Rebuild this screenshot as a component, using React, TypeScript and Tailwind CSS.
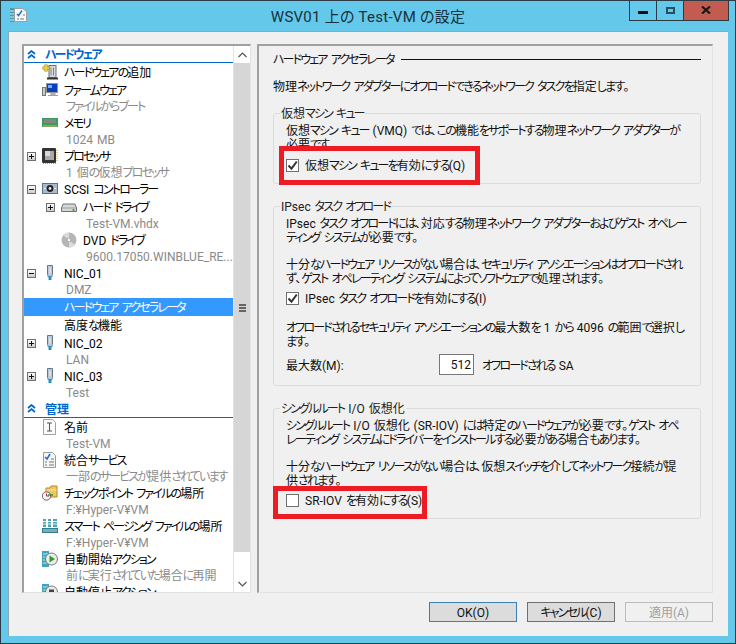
import React from "react";

const K = ({ s }: { s: string }) => (
  <span className="relative top-px [word-spacing:1px]">
    {s.split(/([\u3040-\u30ff]+)/).map((p, i) =>
      i % 2 === 1 ? (
        <span key={i} className="tracking-[-1.85px]">
          {p}
        </span>
      ) : (
        <span key={i}>{p}</span>
      ),
    )}
  </span>
);

const Sq = ({ minus }: { minus?: boolean }) => (
  <svg width="9" height="9" viewBox="0 0 9 9" className="block">
    <defs>
      <linearGradient id="exp" x1="0" y1="0" x2="0" y2="1">
        <stop offset="0" stopColor="#ffffff" />
        <stop offset="1" stopColor="#c8c8c8" />
      </linearGradient>
    </defs>
    <rect x="0.5" y="0.5" width="8" height="8" fill="url(#exp)" stroke="#6e6e6e" />
    <path d={minus ? "M2 4.5h5" : "M2 4.5h5M4.5 2v5"} stroke="#111" />
  </svg>
);

const I = ({ children }: { children: React.ReactNode }) => (
  <svg width="16" height="16" viewBox="0 0 16 16" className="block shrink-0">
    {children}
  </svg>
);

const AddHw = () => (
  <I>
    <rect x="7" y="1.5" width="7" height="12" fill="#d9dcdc" stroke="#6a6f70" />
    <path d="M9 3.5v8M11.5 3.5v8" stroke="#7d8485" />
    <path d="M5 14.5h11" stroke="#333" strokeWidth="2" />
    <path d="M4 0.5v7M0.5 4h7" stroke="#a88a10" strokeWidth="3.2" />
    <path d="M4 1v6M1 4h6" stroke="#f5d94a" strokeWidth="1.6" />
  </I>
);
const Firmware = () => (
  <I>
    <rect x="0.5" y="5.5" width="3" height="8" fill="#c8cccc" stroke="#777" />
    <rect x="4.5" y="1.5" width="11" height="9" fill="#0b3fc0" stroke="#8f9696" />
    <path d="M6 3h4v3H6z" fill="#6fb6f5" />
    <path d="M9 11h4v2H9zM6 13.5h10" stroke="#9a9f9f" fill="#c8cccc" />
  </I>
);
const Memory = () => (
  <I>
    <rect x="0" y="3" width="16" height="9" fill="#3c9b60" />
    <rect x="2" y="4" width="12" height="4" fill="#e8e8e0" />
    <path d="M3 4v4M5 4v4M7 4v4M9 4v4M11 4v4M13 4v4" stroke="#222" />
    <path d="M1 11h14" stroke="#d2b455" />
  </I>
);
const Cpu = () => (
  <I>
    <rect x="0" y="0" width="14" height="15" rx="1" fill="#333" />
    <rect x="3" y="3" width="9" height="9" fill="#a9a9a9" />
    <rect x="3" y="3" width="5" height="5" fill="#d8d8d8" />
    <path d="M15 2v12M1 15.5h13" stroke="#c79a3c" strokeDasharray="1 1" />
  </I>
);
const Scsi = () => (
  <I>
    <rect x="0.5" y="2.5" width="15" height="10" fill="#a7bad0" stroke="#5a718c" />
    <circle cx="8" cy="7.5" r="3.4" fill="#222" />
    <circle cx="8" cy="7.5" r="1.4" fill="#e8e8e8" />
    <path d="M2 7.5h2M12 7.5h2" stroke="#eee" />
  </I>
);
const Hdd = () => (
  <I>
    <path d="M2 5h12l1.5 4v3.5h-15V9z" fill="#d6d8d8" stroke="#6f7375" />
    <path d="M1 9h14" stroke="#9a9da0" />
    <rect x="11.5" y="10" width="2" height="2" fill="#5aa83c" />
  </I>
);
const Dvd = () => (
  <I>
    <circle cx="8" cy="8" r="7.5" fill="#b6b6b6" />
    <path d="M8 8L2 3a7.5 7.5 0 0 1 6-2.5z" fill="#d9d9d9" />
    <path d="M8 8l6 5a7.5 7.5 0 0 1-6 2.5z" fill="#dcdcdc" />
    <circle cx="8" cy="8" r="2" fill="#f4f4f4" stroke="#888" strokeWidth="0.6" />
  </I>
);
const Nic = () => (
  <I>
    <path d="M5.5 0.5h5v9l-1 2h-3l-1-2z" fill="#c6d2de" stroke="#62778c" />
    <path d="M7 2h2v7H7z" fill="#eef2f6" stroke="#8fa2b5" strokeWidth="0.5" />
    <path d="M6.5 12h3v3h-3z" fill="#1a92d6" />
    <path d="M5.5 11.5h1M9.5 11.5h1" stroke="#2aa5e2" />
  </I>
);
const NameI = () => (
  <I>
    <path d="M1.5 0.5h9l3 3v12h-12z" fill="#fbfbfb" stroke="#a0a0a0" />
    <path d="M5 4h5M5 12h5M7.5 4v8" stroke="#555" />
  </I>
);
const Integ = () => (
  <I>
    <path d="M1.5 0.5h9l3 3v12h-12z" fill="#f5f5f5" stroke="#9a9a9a" />
    <path d="M3 5l2 2 3-5" stroke="#1f6fd0" strokeWidth="1.6" fill="none" />
    <path d="M9 7h3M3 10h2M7 10h5M3 13h2M7 13h5" stroke="#777" />
  </I>
);
const Check = () => (
  <I>
    <path d="M4 3h4l1-2h6v11H4z" fill="#f2c45e" stroke="#b68a2c" />
    <path d="M4.5 5h10" stroke="#fbe7b0" />
    <circle cx="4.5" cy="11" r="4.2" fill="#f4f4f4" stroke="#666" />
    <path d="M4.5 8.5V11H7" stroke="#c23" fill="none" />
    <path d="M6 10h5" stroke="#2e8b3a" strokeWidth="1.4" />
  </I>
);
const Paging = () => (
  <I>
    <path d="M1 1h3v8H1zM6 1h3v8H6zM11 1h4v8h-4z" fill="#4fa4b4" />
    <path d="M1 3.5h3M6 3.5h3M11 3.5h4M1 6h3M6 6h3M11 6h4" stroke="#e6f2f4" />
    <rect x="0" y="10" width="16" height="5" fill="#2f7f90" />
    <path d="M2 11v3M4 11v3M6 11v3M8 11v3M10 11v3M12 11v3M14 11v3" stroke="#c9dde2" />
  </I>
);
const AutoStart = ({ stop }: { stop?: boolean }) => (
  <I>
    <rect x="0" y="0" width="7" height="16" fill="#3ea5ba" />
    <path d="M1 3h5M1 6h5M1 9h5M1 12h5" stroke="#bfe6ee" />
    <circle cx="9.5" cy="8" r="6" fill="#ececec" stroke="#777" />
    {stop ? <rect x="7" y="5.5" width="5" height="5" fill="#444" /> : <path d="M7.5 4.5v7l5.5-3.5z" fill="#2f9c2f" />}
  </I>
);

type RowT = {
  t: string;
  icon?: React.ReactNode;
  ex?: "p" | "m";
  d2?: boolean;
  sel?: boolean;
  sub?: string;
  subH?: string;
};

const Row = ({ t, icon, ex, d2, sel, sub, subH }: RowT) => (
  <>
    <div className={`flex h-[18px] shrink-0 items-center ${sel ? "bg-[#3399ff] text-white" : "text-black"}`}>
      <div className={`flex w-[18px] shrink-0 items-center pl-[3px] ${d2 ? "ml-[19px]" : ""}`}>
        {ex ? <Sq minus={ex === "m"} /> : null}
      </div>
      <div className="h-4 w-4 shrink-0">{icon}</div>
      <span className="ml-[6px] whitespace-nowrap leading-[18px]">
        <K s={t} />
      </span>
    </div>
    {sub ? (
      <div className={`${subH ?? "h-[15px]"} shrink-0 whitespace-nowrap leading-[15px] text-[#8a8a8a] ${d2 ? "pl-[62px]" : "pl-[42px]"}`}>
        <K s={sub} />
      </div>
    ) : null}
  </>
);

const Header = ({ t, h }: { t: string; h: string }) => (
  <div className={`flex ${h} shrink-0 items-center border-b border-[#0066cc] pl-[3px] font-bold text-[#0066cc]`}>
    <svg width="9" height="9" viewBox="0 0 9 9" className="block shrink-0">
      <path d="M1 4l3.5-3L8 4M1 8l3.5-3L8 8" fill="none" stroke="#0066cc" strokeWidth="1.7" />
    </svg>
    <span className="ml-[9px] whitespace-nowrap">
      <K s={t} />
    </span>
  </div>
);

const Box = ({ on }: { on?: boolean }) => (
  <span className="flex h-[13px] w-[13px] shrink-0 items-center justify-center border border-[#6f6f6f] bg-white">
    {on ? (
      <svg width="11" height="11" viewBox="0 0 11 11">
        <path d="M1.5 5.5l3 3.2L9.8 1.5" fill="none" stroke="#333" strokeWidth="2" />
      </svg>
    ) : null}
  </span>
);

const CheckRow = ({ on, label, children }: { on?: boolean; label: string; children?: React.ReactNode }) => (
  <div className="relative flex h-4 items-center gap-[6px] whitespace-nowrap">
    <Box on={on} />
    <span>
      <K s={label} />
    </span>
    {children}
  </div>
);

const Group = ({ legend, className, children }: { legend: string; className: string; children: React.ReactNode }) => (
  <fieldset className={`min-w-0 rounded-[3px] border border-[#dcdcdc] pr-2 pb-[10px] pl-3 ${className}`}>
    <legend className="-ml-[6px] h-4 px-px leading-4 whitespace-nowrap text-[#222]">
      <K s={legend} />
    </legend>
    {children}
  </fieldset>
);

const Lines = ({ lines, className }: { lines: string[]; className: string }) => (
  <div className={`leading-[14px] whitespace-nowrap ${className}`}>
    {lines.map((l, i) => (
      <div key={i} className="h-[14px]">
        <K s={l} />
      </div>
    ))}
  </div>
);

const Btn = ({ t, cls }: { t: string; cls: string }) => (
  <div className={`flex h-[20px] w-[88px] items-center justify-center border ${cls}`}>
    <span>
      <K s={t} />
    </span>
  </div>
);

export default function App() {
  return (
    <div className="h-[644px] w-[736px] overflow-hidden border border-[#2b3b45] bg-[#64c8ea] font-['Roboto','Noto_Sans_CJK_JP',sans-serif] text-[12px] text-[#111] [font-feature-settings:'palt']">
      <div className="grid h-[30px] grid-cols-[1fr_auto_1fr]">
        <div className="pt-[6px] pl-[9px]">
          <svg width="17" height="16" viewBox="0 0 17 16" className="block">
            <rect x="0" y="1" width="5" height="14" fill="#3f9fb4" />
            <path d="M0 4h5M0 7h5M0 10h5M0 13h5" stroke="#cfeaf0" />
            <path d="M4.5 1.5h8l4 3v10h-12z" fill="#f8f8f8" stroke="#9aa0a0" />
            <path d="M7 7l1.6 1.6L12 3.5" fill="none" stroke="#1f6fd0" strokeWidth="1.5" />
            <path d="M7 12h2M10 12h4M13 8h2" stroke="#777" />
          </svg>
        </div>
        <div className="pt-[6px] text-[15px] leading-[20px] tracking-[0.25px] whitespace-nowrap text-[#17303c]">WSV01 上の Test-VM の設定</div>
        <div className="flex justify-end pr-[6px]">
          <div className="flex h-[20px] w-[28px] items-center justify-center border-x border-b border-[#2b3b45]">
            <svg width="10" height="3" viewBox="0 0 10 3" className="mt-[4px]">
              <rect width="10" height="3" fill="#111" />
            </svg>
          </div>
          <div className="flex h-[20px] w-[27px] items-center justify-center border-r border-b border-[#2b3b45]">
            <svg width="9" height="7" viewBox="0 0 9 7" className="-mt-[1px]">
              <rect x="1" y="1" width="7" height="5" fill="none" stroke="#245066" strokeWidth="2" />
            </svg>
          </div>
          <div className="flex h-[20px] w-[45px] items-center justify-center border-r border-b border-[#2b3b45] bg-[#c25b50]">
            <svg width="10" height="8" viewBox="0 0 10 8" className="-mt-[2px]">
              <path d="M1 0.5l8 7M9 0.5l-8 7" stroke="#1a1a1a" strokeWidth="2.2" />
            </svg>
          </div>
        </div>
      </div>

      <div className="mx-[7px] flex h-[605px] flex-col border-t border-l border-[#93a7b0] bg-[#f0f0f0] pt-[12px] pr-[15px] pl-[13px]">
        <div className="flex h-[549px] gap-[6px]">
          {/* tree */}
          <div className="flex h-[549px] w-[229px] shrink-0 border-t-2 border-r border-b border-l-2 border-t-[#a0a0a0] border-r-[#e3e3e3] border-b-[#e3e3e3] border-l-[#a0a0a0] bg-white">
            <div className="flex min-w-0 flex-1 flex-col overflow-hidden">
              <Header t="ハードウェア" h="h-[17px]" />
              <Row t="ハードウェアの追加" icon={<AddHw />} />
              <Row t="ファームウェア" icon={<Firmware />} sub="ファイルからブート" />
              <Row t="メモリ" icon={<Memory />} sub="1024 MB" />
              <Row t="プロセッサ" icon={<Cpu />} ex="p" sub="1 個の仮想プロセッサ" />
              <Row t="SCSI コントローラー" icon={<Scsi />} ex="m" />
              <Row t="ハード ドライブ" icon={<Hdd />} ex="p" d2 sub="Test-VM.vhdx" />
              <Row t="DVD ドライブ" icon={<Dvd />} d2 sub="9600.17050.WINBLUE_RE..." />
              <Row t="NIC_01" icon={<Nic />} ex="m" sub="DMZ" subH="h-[16px]" />
              <Row t="ハードウェア アクセラレータ" sel />
              <Row t="高度な機能" />
              <Row t="NIC_02" icon={<Nic />} ex="p" sub="LAN" />
              <Row t="NIC_03" icon={<Nic />} ex="p" sub="Test" />
              <Header t="管理" h="h-[18px]" />
              <Row t="名前" icon={<NameI />} sub="Test-VM" />
              <Row t="統合サービス" icon={<Integ />} sub="一部のサービスが提供されています" />
              <Row t="チェックポイント ファイルの場所" icon={<Check />} sub="F:¥Hyper-V¥VM" />
              <Row t="スマート ページング ファイルの場所" icon={<Paging />} sub="F:¥Hyper-V¥VM" />
              <Row t="自動開始アクション" icon={<AutoStart />} sub="前に実行されていた場合に再開" />
              <Row t="自動停止アクション" icon={<AutoStart stop />} />
            </div>
            <div className="flex w-[17px] shrink-0 flex-col border-l border-[#e3e3e3] bg-white">
              <div className="flex h-[17px] shrink-0 items-center justify-center">
                <svg width="9" height="6" viewBox="0 0 9 6">
                  <path d="M0.5 5L4.5 1l4 4" fill="none" stroke="#555" strokeWidth="1.2" />
                </svg>
              </div>
              <div className="flex h-[489px] shrink-0 flex-col items-center justify-center bg-[#d6d6d6]">
                <div className="h-[2px] w-[7px] bg-[#666]" />
                <div className="mt-[1px] h-[2px] w-[7px] bg-[#666]" />
                <div className="mt-[1px] h-[2px] w-[7px] bg-[#666]" />
              </div>
              <div className="flex-1" />
              <div className="flex h-[17px] shrink-0 items-center justify-center">
                <svg width="9" height="6" viewBox="0 0 9 6">
                  <path d="M0.5 1l4 4 4-4" fill="none" stroke="#555" strokeWidth="1.2" />
                </svg>
              </div>
            </div>
          </div>

          {/* right pane */}
          <div className="flex h-[549px] w-[456px] shrink-0 flex-col border-t-2 border-r border-b border-l-2 border-t-[#a0a0a0] border-r-[#e3e3e3] border-b-[#e3e3e3] border-l-[#a0a0a0] pt-[5px] pr-[11px] pl-[14px]">
            <div className="flex h-4 items-center whitespace-nowrap">
              <span>
                <K s="ハードウェア アクセラレータ" />
              </span>
              <div className="ml-[7px] h-px flex-1 bg-[#111]" />
            </div>
            <div className="mt-[11px] h-4 leading-4 whitespace-nowrap">
              <K s="物理ネットワーク アダプターにオフロードできるネットワーク タスクを指定します。" />
            </div>

            <Group legend="仮想マシン キュー" className="mt-[11px]">
              <Lines
                className="mt-[2px]"
                lines={["仮想マシン キュー (VMQ) では、この機能をサポートする物理ネットワーク アダプターが", "必要です。"]}
              />
              <div className="mt-[6px]">
                <CheckRow on label="仮想マシン キューを有効にする(Q)">
                  <span className="absolute -top-[11px] -left-[7px] h-[39px] w-[201px] border-[5px] border-[#ed1c24]" />
                </CheckRow>
              </div>
            </Group>

            <Group legend="IPsec タスク オフロード" className="mt-[14px]">
              <Lines
                className="mt-[2px]"
                lines={["IPsec タスク オフロードには、対応する物理ネットワーク アダプターおよびゲスト オペレー", "ティング システムが必要です。"]}
              />
              <Lines
                className="mt-[13px]"
                lines={["十分なハードウェア リソースがない場合は、セキュリティ アソシエーションはオフロードされ", "ず、ゲスト オペレーティング システムによってソフトウェアで処理されます。"]}
              />
              <div className="mt-[5px]">
                <CheckRow on label="IPsec タスク オフロードを有効にする(I)" />
              </div>
              <Lines
                className="mt-[14px]"
                lines={["オフロードされるセキュリティ アソシエーションの最大数を 1 から 4096 の範囲で選択し", "ます。"]}
              />
              <div className="mt-[6px] flex h-[21px] items-center whitespace-nowrap">
                <span className="w-[153px]">
                  <K s="最大数(M):" />
                </span>
                <div className="flex h-[21px] w-[35px] items-center justify-end border border-[#777] bg-white pr-[2px]">512</div>
                <span className="ml-2">
                  <K s="オフロードされる SA" />
                </span>
              </div>
            </Group>

            <Group legend="シングルルート I/O 仮想化" className="mt-[14px]">
              <Lines
                className="mt-[2px]"
                lines={["シングルルート I/O 仮想化 (SR-IOV) には特定のハードウェアが必要です。ゲスト オペ", "レーティング システムにドライバーをインストールする必要がある場合もあります。"]}
              />
              <Lines
                className="mt-[13px]"
                lines={["十分なハードウェア リソースがない場合は、仮想スイッチを介してネットワーク接続が提", "供されます。"]}
              />
              <div className="mt-[5px]">
                <CheckRow label="SR-IOV を有効にする(S)">
                  <span className="absolute -top-[6px] -left-[13px] h-[33px] w-[154px] border-[5px] border-[#ed1c24]" />
                </CheckRow>
              </div>
            </Group>
          </div>
        </div>

        <div className="mt-[9px] flex justify-end gap-[10px]">
          <Btn t="OK(O)" cls="border-[#3c7fb1] bg-[#dcdcdc]" />
          <Btn t="キャンセル(C)" cls="border-[#707070] bg-[#dcdcdc]" />
          <Btn t="適用(A)" cls="border-[#bcbcbc] bg-[#f0f0f0] text-[#a0a0a0]" />
        </div>
      </div>
    </div>
  );
}
